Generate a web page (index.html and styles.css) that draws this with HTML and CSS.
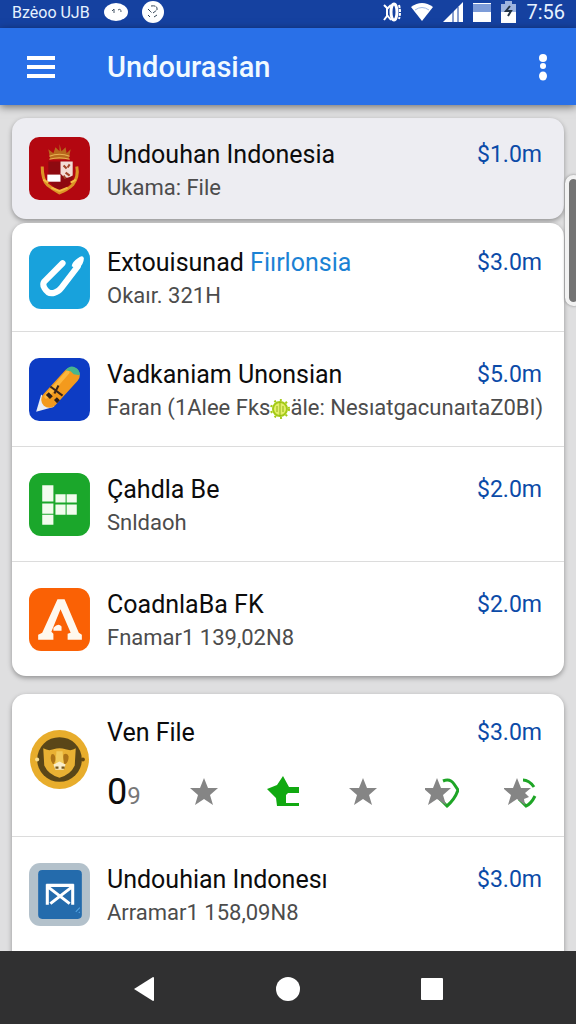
FILE: index.html
```html
<!DOCTYPE html>
<html lang="id">
<head>
  <meta charset="UTF-8" />
  <meta name="viewport" content="width=device-width, initial-scale=1" />
  <title>Undourasian</title>
  <link rel="stylesheet" href="styles.css">
</head>
<body>
  <div class="statusbar">
    <span class="carrier">Bzėoo UJB</span>
    <svg class="chat" width="24" height="20" viewBox="0 0 24 20">
      <ellipse cx="12" cy="10" rx="12" ry="9" fill="#fff"/>
      <path d="M8 9l2-2v4M14 8q3-2 3 2" fill="none" stroke="#456" stroke-width="1"/>
    </svg>
    <svg width="22" height="22" viewBox="0 0 22 22">
      <circle cx="11" cy="11" r="11" fill="#fff"/>
      <path d="M6 8l4 4M9 5q7-1 6 4l-4 3M6 14l2 2M12 16l3-2" fill="none" stroke="#345" stroke-width="1" stroke-dasharray="4 1"/>
    </svg>
    <div class="system">
      <svg width="18" height="20" viewBox="0 0 18 20">
        <path d="M1 3l3 3v8l-3 4M8 3L4 7v6l4 5" fill="none" stroke="#fff" stroke-width="2"/>
        <ellipse cx="11" cy="10" rx="3" ry="8" fill="none" stroke="#fff" stroke-width="3"/>
        <path d="M16 3q2 7 0 14" fill="none" stroke="#fff" stroke-width="2" stroke-dasharray="3 1"/>
      </svg>
      <svg width="22" height="20" viewBox="0 0 22 20">
        <path d="M0 5Q11-3 22 5L11 19z" fill="#fff"/>
        <path d="M4 8Q11 3 18 8" fill="none" stroke="#9db8e6" stroke-width="1"/>
      </svg>
      <svg width="20" height="20" viewBox="0 0 20 20">
        <path d="M0 20L20 0v20z" fill="#fff"/>
        <path d="M10 9v11M15 5v15" stroke="#1541a0" stroke-width="1"/>
      </svg>
      <svg width="18" height="20" viewBox="0 0 18 20">
        <path d="M0 1h18v9H0z" fill="#7d9cd8"/>
        <path d="M0 10h18v10H0zM0 1h18v1H0z" fill="#fff"/>
      </svg>
      <svg width="15" height="22" viewBox="0 0 15 22">
        <path d="M0 3h4V0h7v3h4v9H0z" fill="#9db4e0"/>
        <path d="M0 11h15v11H0z" fill="#fff"/>
        <path d="M9 5l-4 5h5l-3 5" fill="none" stroke="#234" stroke-width="2"/>
      </svg>
      <span class="clock">7:56</span>
    </div>
  </div>

  <header class="appbar">
    <button class="menu" aria-label="Menu">
      <svg width="30" height="22" viewBox="0 0 30 22">
        <path d="M1 2h28M1 11h28M1 20h28" stroke="#fff" stroke-width="4"/>
      </svg>
    </button>
    <h1>Undourasian</h1>
    <button class="more" aria-label="More">
      <svg width="10" height="28" viewBox="0 0 10 28">
        <circle cx="5" cy="5" r="4" fill="#fff"/>
        <ellipse cx="5" cy="13" rx="3" ry="3" fill="#fff"/>
        <ellipse cx="5" cy="23" rx="4" ry="4.5" fill="#fff"/>
      </svg>
    </button>
  </header>

  <main class="content">
    <ul class="card selected">
      <li class="row">
        <svg class="icon" viewBox="0 0 60 62">
          <rect width="60" height="62" rx="10" fill="#b30710"/>
          <path d="M21 22l-2-10 5 4 2-6 4 4 0-7 2 7 4-4 1 6 4-4-2 10z" fill="#b8681c"/>
          <path d="M20 19q10-4 20 0M20 22q10-3 20 0" fill="none" stroke="#e8b052" stroke-width="1"/>
          <path d="M19 24h24v16q-2 9-12 12-10-3-12-12z" fill="#8e0a10"/>
          <path d="M31 24h12v14q-7 5-12-2z" fill="#f3dcd6"/>
          <path d="M18 37h13v7H18z" fill="#fff"/>
          <path d="M34 28l3 3M38 30l2-3M36 35l4 3M34 38l2 3" stroke="#a2442a" stroke-width="2"/>
          <path d="M13 29q0 13 5 18 5 4 12 8 8-3 13-8 6-8 4-18" fill="none" stroke="#dc9426" stroke-width="3"/>
          <path d="M14 42l5 3M46 42l-5 3M22 50l8 3 8-3" fill="none" stroke="#f3bb42" stroke-width="2"/>
        </svg>
        <div class="info">
          <div class="line"><h2>Undouhan Indonesia</h2><span class="price">$1.0m</span></div>
          <p>Ukama: File</p>
        </div>
      </li>
    </ul>

    <ul class="card">
      <li class="row">
        <svg class="icon" viewBox="0 0 60 62">
          <rect width="60" height="62" rx="12" fill="#18a2dc"/>
          <path d="M33 17L15 35q-2 3 0 6 4 7 10 5 4-1 7-5L48 20" fill="none" stroke="#fff" stroke-width="6" stroke-linecap="round" stroke-linejoin="round"/>
          <path d="M42 20q0-4 6-8 5-4 6 0 0 6-6 11l-4-2z" fill="#fff"/>
        </svg>
        <div class="info">
          <div class="line"><h2>Extouisunad <a href="#">Fiırlonsia</a></h2><span class="price">$3.0m</span></div>
          <p>Okaır. 321H</p>
        </div>
      </li>
      <li class="row">
        <svg class="icon" viewBox="0 0 60 62">
          <rect width="60" height="62" rx="10" fill="#0d3cc4"/>
          <path d="M12 36l-5 17 18-5z" fill="#e9edf5"/>
          <path d="M20 41L42 17" stroke="#f39a1d" stroke-width="16" stroke-linecap="round"/>
          <path d="M17 38L38 14" stroke="#fdb73d" stroke-width="4" stroke-linecap="round"/>
          <path d="M36 12q4-5 9-3 5 2 5 8l-6-1-3-3z" fill="#48b58d"/>
          <path d="M18 35l4 4M26 40l3 3" stroke="#30201b" stroke-width="4"/>
          <path d="M21 28l12 9M29 27l-4 8" stroke="#3a251a" stroke-width="2"/>
        </svg>
        <div class="info">
          <div class="line"><h2>Vadkaniam Unonsian</h2><span class="price">$5.0m</span></div>
          <p>Faran (1Alee Fks<svg class="gear" viewBox="0 0 20 20"><circle cx="10" cy="10" r="7" fill="#e4ef6a" stroke="#a4ca16" stroke-width="2"/><circle cx="10" cy="10" r="9" fill="none" stroke="#a4ca16" stroke-width="2" stroke-dasharray="2 4"/><path d="M10 3v14M7 7v6M13 7v6" stroke="#8fb510" stroke-width="1"/></svg>äle: NesıatgacunaıtaZ0BI)</p>
        </div>
      </li>
      <li class="row">
        <svg class="icon" viewBox="0 0 60 62">
          <rect width="60" height="62" rx="12" fill="#1ba72b"/>
          <path d="M13 12h11v16H13zM13 30h11v10H13zM13 41h11v10H13zM26 21h10v8H26zM37 21h10v8H37zM26 31h10v10H26zM37 31h10v10H37z" fill="#f2fcee"/>
        </svg>
        <div class="info">
          <div class="line"><h2>Çahdla Be</h2><span class="price">$2.0m</span></div>
          <p>Snldaoh</p>
        </div>
      </li>
      <li class="row">
        <svg class="icon" viewBox="0 0 60 62">
          <rect width="60" height="62" rx="12" fill="#fa6105"/>
          <path d="M28 11h7l14 33 3 2v5H38v-6l3-1-10-23-9 22 2 2v6H9v-5l4-2z" fill="#fff8ee"/>
          <path d="M24 42v-3q5-5 8-1v4z" fill="#fff8ee"/>
        </svg>
        <div class="info">
          <div class="line"><h2>CoadnlaBa FK</h2><span class="price">$2.0m</span></div>
          <p>Fnamar1 139,02N8</p>
        </div>
      </li>
    </ul>

    <ul class="card last">
      <li class="row rated">
        <svg class="icon" viewBox="0 0 60 62">
          <circle cx="30" cy="31" r="29" fill="#e8ad2c"/>
          <circle cx="30" cy="31" r="22" fill="#5a4618"/>
          <path d="M14 20q5 3 10 1 6-2 12 0 6 2 10-1l-1 17q-4 9-15 12-11-3-15-12z" fill="#e9b133"/>
          <path d="M22 26q4-2 4 6l-2 4q-4-4-2-10zM34 26q4-2 5 2 0 6-4 8-2-4-1-10z" fill="#ad7418"/>
          <path d="M27 23h6l1 12h-8z" fill="#f2cb5c"/>
          <path d="M24 36l6-3 6 3-2 5h-8z" fill="#f9edca"/>
          <path d="M26 39h3M32 39h3" stroke="#75581c" stroke-width="2"/>
          <circle cx="8" cy="31" r="2" fill="#f9df91"/>
          <circle cx="53" cy="31" r="2" fill="#614510"/>
        </svg>
        <div class="info">
          <div class="line"><h2>Ven File</h2><span class="price">$3.0m</span></div>
          <div class="rating">
            <span class="count">0<small>9</small></span>
            <button aria-label="1">
              <svg viewBox="0 0 34 34"><path class="star" d="M17 3l4 10h10l-8 7 3 10-9-6-9 6 3-10-8-7h10z"/></svg>
            </button>
            <button aria-label="2">
              <svg viewBox="0 0 34 34"><path d="M17 1l6 11h10v6H22l-2 2v8h13v3H11l-1-8-9-9 10-4z" fill="#11a911"/></svg>
            </button>
            <button aria-label="3">
              <svg viewBox="0 0 34 34"><path class="star" d="M17 3l4 10h10l-8 7 3 10-9-6-9 6 3-10-8-7h10z"/></svg>
            </button>
            <button aria-label="4">
              <svg viewBox="0 0 34 34"><path class="ring" d="M18 6q7-3 11 3l4 6q-3 9-11 16l-7-7"/><path class="star" d="M12 3l4 10h10l-8 7 3 10-9-6-9 6 3-10-8-7h10z"/></svg>
            </button>
            <button aria-label="5">
              <svg viewBox="0 0 34 34"><path class="ring" d="M19 5q6 0 11 7M15 24l7 7q5-2 9-10"/><path class="star" d="M13 3l4 10h10l-6 5 4 4-5 2 1 6-8-6-9 6 3-10-8-7h10z"/></svg>
            </button>
          </div>
        </div>
      </li>
      <li class="row">
        <svg class="icon" viewBox="0 0 60 62">
          <rect width="60" height="62" rx="11" fill="#b3c1cb"/>
          <rect x="9" y="7" width="43" height="48" rx="4" fill="#246bac"/>
          <path d="M17 22h27M18 21v20M43 21v20M18 23l22 17M43 23L21 40" fill="none" stroke="#fff" stroke-width="3"/>
          <path d="M46 48l4-4M49 49l1-1" stroke="#53a5e4" stroke-width="1"/>
        </svg>
        <div class="info">
          <div class="line"><h2>Undouhian Indonesı</h2><span class="price">$3.0m</span></div>
          <p>Arramar1 158,09N8</p>
        </div>
      </li>
    </ul>
    <div class="thumb"></div>
  </main>

  <nav class="navbar">
    <button aria-label="Back">
      <svg viewBox="0 0 26 26"><path d="M3 13L22 1q1 0 1 1v22q0 1-1 1z" fill="#fff"/></svg>
    </button>
    <button aria-label="Home">
      <svg viewBox="0 0 26 26"><circle cx="13" cy="13" r="12" fill="#fff"/></svg>
    </button>
    <button aria-label="Recent">
      <svg viewBox="0 0 26 26"><rect x="2" y="2" width="22" height="22" rx="1" fill="#fff"/></svg>
    </button>
  </nav>
</body>
</html>
```
FILE: styles.css
```css
* {
  box-sizing: border-box;
}
body {
  margin: 0;
  height: 100vh;
  display: flex;
  flex-direction: column;
  font-family: Roboto, "Liberation Sans", sans-serif;
  background-color: #dfdfe0;
  color: #0c0c0c;
}
h1, h2, p, ul {
  margin: 0;
  padding: 0;
}
button {
  padding: 0;
  border: none;
  background: none;
  cursor: pointer;
}
svg {
  display: block;
  flex-shrink: 0;
}
.statusbar {
  height: 28px;
  flex-shrink: 0;
  display: flex;
  align-items: center;
  padding: 0 11px 4px 12px;
  background-color: #1541a0;
  color: #e6f2ff;
  font-size: 16px;
}
.chat {
  margin: 0 14px;
}
.system {
  margin-left: auto;
  display: flex;
  align-items: center;
  gap: 10px;
}
.clock {
  font-size: 20px;
}
.appbar {
  height: 77px;
  flex-shrink: 0;
  display: flex;
  align-items: center;
  padding: 0 28px 0 26px;
  background-color: #2970e8;
  box-shadow: 0 2px 8px rgba(0, 0, 0, 0.5);
  z-index: 1;
}
.appbar h1 {
  flex: 1;
  margin-left: 51px;
  font-size: 29px;
  font-weight: 500;
  color: #f1faff;
}
.content {
  position: relative;
  flex: 1;
  min-height: 0;
  overflow: hidden;
  padding: 13px 12px 0;
}
.card {
  list-style: none;
  margin-bottom: 18px;
  background-color: #fff;
  border-radius: 14px;
  box-shadow: 0 2px 5px rgba(0, 0, 0, 0.35);
}
.selected {
  margin-bottom: 4px;
  background-color: #ededf2;
}
.last {
  padding-bottom: 20px;
}
.row {
  display: flex;
  align-items: center;
  gap: 17px;
  min-height: 115px;
  padding: 0 22px 0 17px;
}
.row + .row {
  border-top: 1px solid #dcdcdc;
}
.row:first-child {
  min-height: 108px;
}
.selected .row:first-child {
  min-height: 101px;
}
.icon {
  width: 61px;
  height: 63px;
}
.info {
  flex: 1;
  min-width: 0;
  padding-top: 4px;
}
.line {
  display: flex;
  justify-content: space-between;
}
h2, p, .price {
  line-height: 33px;
  white-space: nowrap;
}
h2 {
  font-size: 25px;
  font-weight: 400;
}
h2 a {
  color: #1b82d4;
  text-decoration: none;
}
p {
  font-size: 22px;
  color: #4c4c4c;
}
.price {
  font-size: 23px;
  color: #0b4ba8;
}
.gear {
  display: inline-block;
  width: 20px;
  height: 20px;
  vertical-align: middle;
}
.row.rated {
  min-height: 142px;
  align-items: flex-start;
  padding-top: 18px;
}
.rated .icon {
  margin-top: 16px;
}
.rating {
  display: flex;
  align-items: center;
  justify-content: space-between;
  margin-top: 18px;
  padding-right: 4px;
  height: 50px;
}
.count {
  width: 35px;
  font-size: 36px;
}
.count small {
  font-size: 24px;
  color: #777;
}
.rating svg {
  width: 34px;
  height: 34px;
}
.star {
  fill: #858585;
}
.ring {
  fill: none;
  stroke: #1ea526;
  stroke-width: 3;
}
.thumb {
  position: absolute;
  top: 70px;
  right: -6px;
  width: 17px;
  height: 131px;
  background-color: #747474;
  border: 4px solid #f2f2f2;
  border-radius: 9px;
  box-shadow: 0 0 3px rgba(0, 0, 0, 0.4);
}
.navbar {
  height: 73px;
  flex-shrink: 0;
  display: flex;
  align-items: center;
  justify-content: center;
  gap: 118px;
  padding-top: 3px;
  background-color: #303031;
}
.navbar svg {
  width: 26px;
  height: 26px;
}
```
